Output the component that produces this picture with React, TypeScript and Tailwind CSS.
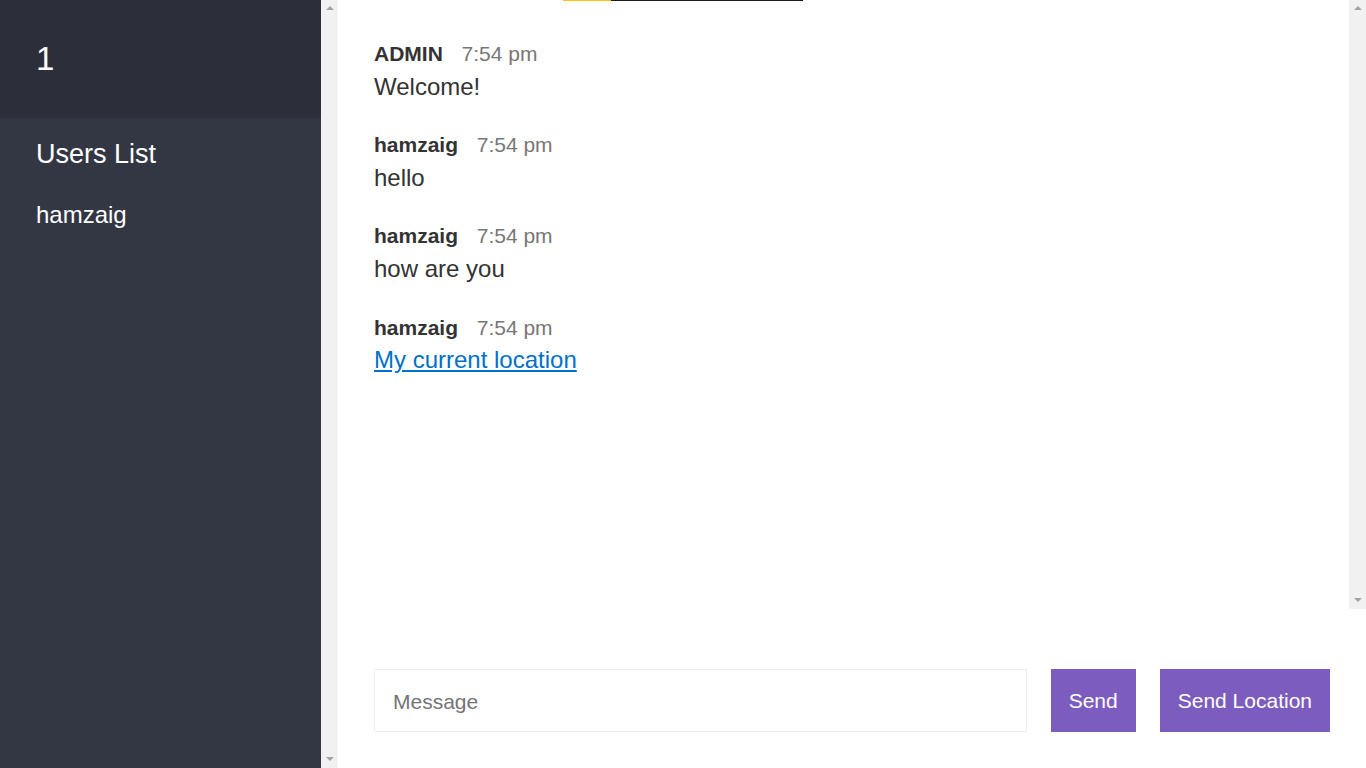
const messages = [
  { name: "ADMIN", time: "7:54 pm", text: "Welcome!" },
  { name: "hamzaig", time: "7:54 pm", text: "hello" },
  { name: "hamzaig", time: "7:54 pm", text: "how are you" },
  { name: "hamzaig", time: "7:54 pm", text: "My current location", link: true },
];

const users = ["hamzaig"];

// classic scrollbar strip with only the arrow buttons (no thumb, nothing to scroll)
const ScrollStrip = () => (
  <div className="flex w-[17px] shrink-0 flex-col items-center justify-between bg-[#f1f1f1] py-[6px]">
    <svg width="8" height="5" viewBox="0 0 8 5">
      <path d="M4 0 L8 4 L0 4 Z" fill="#a3a3a3" />
    </svg>
    <svg width="8" height="5" viewBox="0 0 8 5">
      <path d="M0 0 L8 0 L4 4 Z" fill="#a3a3a3" />
    </svg>
  </div>
);

const App = () => {
  return (
    <div className="flex h-[768px] w-[1366px] overflow-hidden bg-white text-[#333] font-['Liberation_Sans',Arial,sans-serif] leading-[1.4]">
      {/* Sidebar */}
      <aside className="flex w-[338px] shrink-0 bg-[#333744] text-white">
        <div className="flex-1">
          <h2 className="bg-[#2c2f3a] p-[36px] text-[33px] font-normal leading-[1.4]">1</h2>
          <h3 className="mb-[6px] px-[36px] pt-[18px] text-[27px] font-medium leading-[1.4]">Users List</h3>
          <ul className="list-none px-[36px] pt-[18px] text-[24px] font-light">
            {users.map((u) => (
              <li key={u}>{u}</li>
            ))}
          </ul>
        </div>
        <ScrollStrip />
      </aside>

      {/* Main */}
      <div className="relative flex min-w-0 flex-1 flex-col">
        <div className="absolute left-[225px] top-0 flex h-px">
          <div className="w-[48px] bg-[#ffc107]" />
          <div className="w-[192px] bg-[#1a1a1a]" />
        </div>

        <div className="flex min-h-0 flex-1">
          <div className="flex-1 px-[36px] pt-[36px]">
            {messages.map((m, i) => (
              <div key={i} className="mb-[24px] text-[24px]">
                <p>
                  <span className="mr-[12px] text-[21px] font-bold">{m.name}</span>{" "}
                  <span className="text-[21px] text-[#777]">{m.time}</span>
                </p>
                {m.link ? (
                  <p>
                    <a href="#" className="text-[#0070cc] underline">
                      {m.text}
                    </a>
                  </p>
                ) : (
                  <p>{m.text}</p>
                )}
              </div>
            ))}
          </div>
          <ScrollStrip />
        </div>

        <div className="mt-[24px] flex shrink-0 p-[36px]">
          <form className="mr-[24px] flex flex-1" onSubmit={(e) => e.preventDefault()}>
            <input
              placeholder="Message"
              className="mr-[24px] min-w-0 flex-1 border border-[#eee] px-[18px] pt-[19px] pb-[17px] text-[21px] leading-[25px] outline-none placeholder:text-[#757575]"
            />
            <button className="bg-[#7c5cbf] p-[18px] text-[21px] leading-[1.2] text-white">Send</button>
          </form>
          <button className="bg-[#7c5cbf] p-[18px] text-[21px] leading-[1.2] text-white">Send Location</button>
        </div>
      </div>
    </div>
  );
};

export default App;
